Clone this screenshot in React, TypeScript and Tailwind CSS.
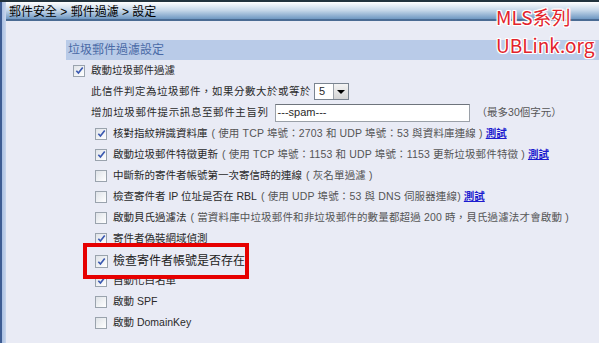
import React from "react";

const font = { fontFamily: '"Liberation Sans", "Noto Sans CJK TC", sans-serif' };

function Box({ checked, big }: { checked?: boolean; big?: boolean }) {
  const s = big ? "w-[13px] h-[13px]" : "w-[12px] h-[12px]";
  return (
    <span
      className={`${s} shrink-0 border border-[#9aa3ad] bg-gradient-to-br from-[#dfe3e8] to-[#ffffff] flex items-center justify-center`}
    >
      {checked && (
        <svg viewBox="0 0 10 10" className="w-[9px] h-[9px]">
          <path d="M1.5 5.2 L3.8 7.8 L8.6 1.6" fill="none" stroke="#3a58b0" strokeWidth="1.8" />
        </svg>
      )}
    </span>
  );
}

function Link() {
  return <span className="ml-[3px] text-[#1c1ccf] font-bold underline">測試</span>;
}

function Row({
  level,
  checked,
  label,
  note,
  link,
}: {
  level: 1 | 2;
  checked: boolean;
  label: string;
  note?: string;
  link?: boolean;
}) {
  return (
    <div className={`h-[21px] flex items-center ${level === 1 ? "pl-[7px]" : "pl-[29px]"}`}>
      <Box checked={checked} />
      <span className="ml-[6px] text-[#2a2a2a] whitespace-nowrap">{label}</span>
      {note && <span className="ml-[4px] text-[#555] whitespace-nowrap tracking-[0.15px]">{note}</span>}
      {link && <Link />}
    </div>
  );
}

export default function App() {
  return (
    <div className="w-[599px] h-[343px] overflow-hidden relative bg-[#e9ebf5] text-[10.5px]" style={font}>
      <div className="h-[2px] bg-[#22333d]" />
      <div className="flex h-[341px]">
        <div className="w-[6px] shrink-0 flex">
          <div className="w-[2px] bg-[#3d5c93]" />
          <div className="w-[4px] bg-gradient-to-r from-[#a9bfe2] to-[#c9d6ec]" />
        </div>
        <div className="flex-1 flex flex-col">
          <div className="h-[19px] bg-gradient-to-b from-[#ffffff] via-[#c4d6e8] to-[#6f98c2] border-b-[2px] border-[#4a6b93] flex items-center pl-[3px] pt-[3px] text-[12px] text-black">
            郵件安全 &gt; 郵件過濾 &gt; 設定
          </div>
          <div className="mt-[19px] ml-[60px]">
            <div className="h-[20px] bg-[#b9cbe8] flex items-center pl-[2px] text-[12px] text-[#4a6aa6]">
              垃圾郵件過濾設定
            </div>
            <div className="h-[21px] flex items-center pl-[7px]">
              <Box checked />
              <span className="ml-[6px] text-[#2a2a2a]">啟動垃圾郵件過濾</span>
            </div>
            <div className="h-[21px] flex items-center pl-[25px] text-[#2a2a2a]">
              <span className="tracking-[0.5px]">此信件判定為垃圾郵件，如果分數大於或等於</span>
              <div className="ml-[3px] w-[35px] h-[17px] bg-white border border-[#7a8490] flex items-center">
                <span className="flex-1 pl-[4px] text-[11px]">5</span>
                <span className="w-[15px] h-[15px] bg-gradient-to-b from-[#f4f4f4] to-[#d4d4d4] border-l border-[#9aa0a8] flex items-center justify-center">
                  <span className="w-0 h-0 border-l-[4px] border-r-[4px] border-t-[4px] border-l-transparent border-r-transparent border-t-black" />
                </span>
              </div>
            </div>
            <div className="h-[21px] flex items-center pl-[25px] text-[#2a2a2a]">
              <span className="tracking-[0.6px]">增加垃圾郵件提示訊息至郵件主旨列</span>
              <div className="ml-[6px] w-[195px] h-[18px] bg-white border border-[#9aa0a8] border-t-[#6e747c] flex items-center pl-[2px] text-[11px]">
                ---spam---
              </div>
              <span className="ml-[7px] text-[#555]">（最多30個字元）</span>
            </div>
            <Row level={2} checked label="核對指紋辨識資料庫" note="( 使用 TCP 埠號：2703 和 UDP 埠號：53 與資料庫連線 )" link />
            <Row level={2} checked label="啟動垃圾郵件特徵更新" note="( 使用 TCP 埠號：1153 和 UDP 埠號：1153 更新垃圾郵件特徵 )" link />
            <Row level={2} checked={false} label="中斷新的寄件者帳號第一次寄信時的連線" note="( 灰名單過濾 )" />
            <Row level={2} checked={false} label="檢查寄件者 IP 位址是否在 RBL" note="( 使用 UDP 埠號：53 與 DNS 伺服器連線)" link />
            <Row level={2} checked={false} label="啟動貝氏過濾法" note="( 當資料庫中垃圾郵件和非垃圾郵件的數量都超過 200 時，貝氏過濾法才會啟動 )" />
            <Row level={2} checked label="寄件者偽裝網域偵測" />
            {/* row covered by the highlight overlay */}
            <div className="h-[21px]" />
            <Row level={2} checked label="自動化白名單" />
            <Row level={2} checked={false} label="啟動 SPF" />
            <Row level={2} checked={false} label="啟動 DomainKey" />
          </div>
        </div>
      </div>

      {/* highlight overlay */}
      <div className="absolute left-[83px] top-[243px] w-[166px] h-[36px] border-[4px] border-[#e60000] bg-[#e9ebf5] flex items-center pl-[8px]">
        <Box checked big />
        <span className="ml-[5px] text-[12px] leading-[14px] text-[#222] whitespace-nowrap">檢查寄件者帳號是否存在</span>
      </div>

      {/* watermark */}
      <div
        className="absolute left-[496px] top-[6px] flex flex-col gap-[6px] text-[19px] leading-[22px] text-[#e3232b] whitespace-nowrap"
        style={{
          fontFamily: '"Noto Sans CJK TC", sans-serif',
          textShadow:
            "1px 0 0 #fff, -1px 0 0 #fff, 0 1px 0 #fff, 0 -1px 0 #fff, 1px 1px 0 #fff, -1px -1px 0 #fff, 1px -1px 0 #fff, -1px 1px 0 #fff, 0 0 3px #fff",
        }}
      >
        <div>MLS系列</div>
        <div>UBLink.org</div>
      </div>
    </div>
  );
}
